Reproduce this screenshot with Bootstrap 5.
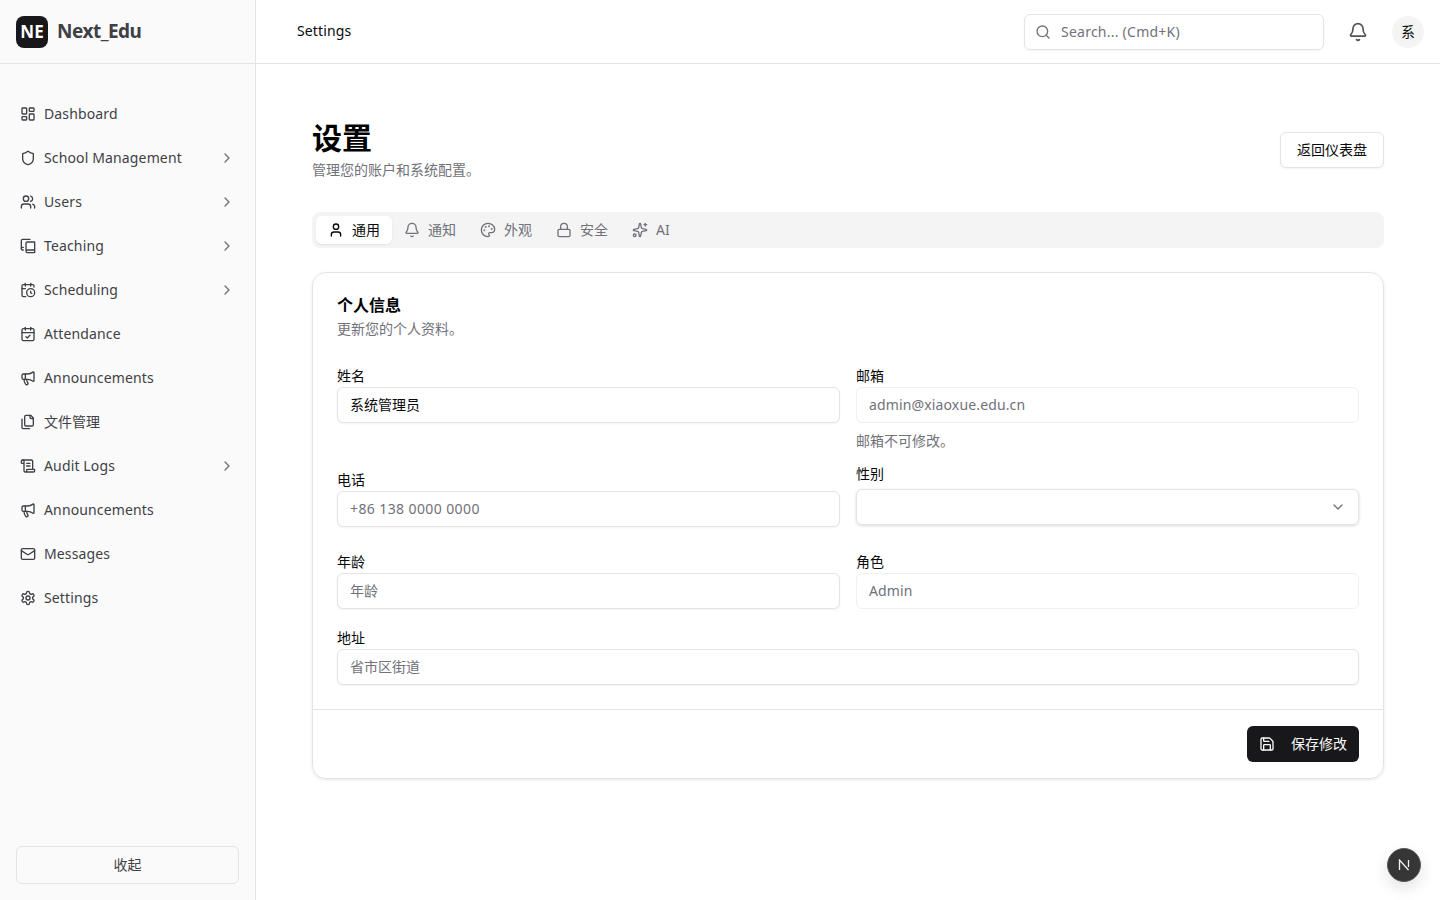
<!DOCTYPE html>
<html lang="zh-CN">
<head>
  <meta charset="UTF-8" />
  <title>Settings | Next_Edu</title>
  <meta name="viewport" content="width=device-width, initial-scale=1.0" />
  <link href="https://cdn.jsdelivr.net/npm/bootstrap@5.3.3/dist/css/bootstrap.min.css" rel="stylesheet" />
  <style>
    body {
      font-family: "Noto Sans", "Noto Sans CJK SC", sans-serif;
      font-size: 14px;
      color: #09090b;
      height: 100vh;
      overflow: hidden;
    }

    .ico {
      width: 16px;
      height: 16px;
      flex: none;
      fill: none;
      stroke: currentColor;
      stroke-width: 2;
      stroke-linecap: round;
      stroke-linejoin: round;
    }

    /* the font sits a pixel low in its line box, this lifts it */
    .lbl {
      margin-bottom: 2px;
    }

    .lat {
      letter-spacing: .14px;
    }

    .side-bar {
      width: 256px;
      flex: none;
      background: #fafafa;
      border-right: 1px solid #e4e4e7;
    }

    .brand-row {
      height: 64px;
      padding: 0 16px;
      gap: 9px;
      border-bottom: 1px solid #e4e4e7;
    }

    .brand-logo {
      width: 32px;
      height: 32px;
      border-radius: 8px;
      background: #18181b;
      color: #fff;
      font-size: 17px;
      font-weight: 700;
    }

    .brand-name {
      font-size: 19px;
      font-weight: 700;
      letter-spacing: -.5px;
      color: #3f3f46;
    }

    .side-nav {
      padding: 28px 16px 0;
    }

    .side-link {
      height: 44px;
      padding: 0 4px;
      gap: 8px;
      color: #3f3f46;
      text-decoration: none;
    }

    .side-link .chev {
      margin-left: auto;
      color: #71717a;
    }

    .side-foot {
      padding: 0 16px 16px;
    }

    .collapse-btn {
      height: 38px;
      padding: 0 0 2px;
      background: #fafafa;
      border: 1px solid #e4e4e7;
      border-radius: 6px;
      color: #3f3f46;
      font-size: 14px;
    }

    .top-bar {
      height: 64px;
      flex: none;
      padding: 0 16px 0 41px;
      border-bottom: 1px solid #e4e4e7;
    }

    .search-box {
      width: 300px;
      height: 36px;
      padding: 0 10px;
      gap: 10px;
      border: 1px solid #e4e4e7;
      border-radius: 6px;
      color: #71717a;
      box-shadow: 0 1px 2px rgba(0, 0, 0, .05);
    }

    .search-txt {
      letter-spacing: .24px;
    }

    .bell-btn {
      margin: 0 24px 0 24px;
      color: #52525b;
    }

    .bell-btn .ico {
      width: 20px;
      height: 20px;
    }

    .avatar-dot {
      width: 32px;
      height: 32px;
      background: #f4f4f5;
    }

    .page-body {
      padding: 56px 56px 0;
    }

    .page-title {
      font-size: 30px;
      line-height: 36px;
      font-weight: 700;
      margin: 0;
      color: #000;
    }

    .muted-text {
      color: #71717a;
    }

    .page-sub {
      line-height: 21px;
      margin: 3px 0 0;
    }

    .back-btn {
      height: 36px;
      padding: 0 16px 2px;
      font-size: 14px;
      color: #09090b;
      background: #fff;
      border: 1px solid #e4e4e7;
      border-radius: 6px;
      box-shadow: 0 1px 2px rgba(0, 0, 0, .05);
    }

    .tab-strip {
      height: 36px;
      margin-top: 32px;
      padding: 4px;
      background: #f4f4f5;
      border-radius: 8px;
    }

    .tab-item {
      height: 28px;
      padding: 0 12px;
      gap: 8px;
      color: #71717a;
      border-radius: 6px;
    }

    .tab-item.on {
      background: #fff;
      color: #09090b;
      box-shadow: 0 1px 2px rgba(0, 0, 0, .08);
    }

    .form-panel {
      margin-top: 24px;
      border: 1px solid #e4e4e7;
      border-radius: 14px;
      box-shadow: 0 1px 3px rgba(0, 0, 0, .1);
    }

    .panel-body {
      padding: 20px 24px 24px;
    }

    .panel-title {
      font-size: 16px;
      line-height: 24px;
      font-weight: 700;
      margin: 0;
      color: #000;
    }

    .panel-sub {
      line-height: 21px;
      margin: 1px 0 0;
    }

    .fld-label {
      display: block;
      line-height: 19px;
      margin: 0 0 2px;
      font-size: 14px;
    }

    .fld-input {
      height: 36px;
      padding: 0 12px 2px;
      font-size: 14px;
      color: #09090b;
      border: 1px solid #e4e4e7;
      border-radius: 6px;
      box-shadow: 0 1px 2px rgba(0, 0, 0, .05);
    }

    .fld-input::placeholder {
      color: #71717a;
      opacity: 1;
    }

    .fld-input:disabled {
      background: #fff;
      color: #71717a;
      box-shadow: none;
      border-color: #f0f0f2;
    }

    .fld-digits {
      letter-spacing: .4px;
    }

    .fld-select {
      height: 36px;
      padding: 0 12px;
      color: #71717a;
      border: 1px solid #e4e4e7;
      border-radius: 6px;
      box-shadow: 0 1px 3px rgba(0, 0, 0, .15);
      margin: 6px 0 2px;
    }

    .fld-hint {
      line-height: 21px;
      margin: 7px 0 1px;
    }

    .form-row-a { margin-top: 27px; }
    .form-row-b { margin-top: 12px; }
    .form-row-c { margin-top: 25px; }
    .form-row-d { margin-top: 19px; }

    .panel-foot {
      padding: 16px 24px;
      border-top: 1px solid #e4e4e7;
    }

    .save-btn {
      height: 36px;
      padding: 0 12px;
      gap: 16px;
      font-size: 14px;
      color: #fafafa;
      background: #18181b;
      border: 0;
      border-radius: 6px;
    }

    .dev-badge {
      position: fixed;
      right: 19px;
      bottom: 18px;
      width: 34px;
      height: 34px;
      background: #363636;
      border: 1px solid #5a5a5a;
      box-shadow: 0 6px 16px rgba(0, 0, 0, .12);
    }

    .dev-badge svg {
      width: 12px;
      height: 12px;
      fill: none;
      stroke: #f2f2f2;
      stroke-width: 1.3;
    }
  </style>
</head>
<body class="d-flex">
  <svg class="d-none">
    <symbol id="i-dash" viewBox="0 0 24 24"><rect width="7" height="9" x="3" y="3" rx="1"/><rect width="7" height="5" x="14" y="3" rx="1"/><rect width="7" height="9" x="14" y="12" rx="1"/><rect width="7" height="5" x="3" y="16" rx="1"/></symbol>
    <symbol id="i-shield" viewBox="0 0 24 24"><path d="M20 13c0 5-3.5 7.5-7.66 8.95a1 1 0 0 1-.67-.01C7.5 20.5 4 18 4 13V6a1 1 0 0 1 1-1c2 0 4.5-1.2 6.24-2.72a1.17 1.17 0 0 1 1.52 0C14.51 3.81 17 5 19 5a1 1 0 0 1 1 1z"/></symbol>
    <symbol id="i-users" viewBox="0 0 24 24"><path d="M16 21v-2a4 4 0 0 0-4-4H6a4 4 0 0 0-4 4v2"/><circle cx="9" cy="7" r="4"/><path d="M22 21v-2a4 4 0 0 0-3-3.87"/><path d="M16 3.13a4 4 0 0 1 0 7.75"/></symbol>
    <symbol id="i-chev" viewBox="0 0 24 24"><path d="m9 18 6-6-6-6"/></symbol>
    <symbol id="i-down" viewBox="0 0 24 24"><path d="m6 9 6 6 6-6"/></symbol>
    <symbol id="i-book" viewBox="0 0 24 24"><path d="M2 16V4a2 2 0 0 1 2-2h11"/><path d="M22 18H11a2 2 0 1 0 0 4h10.5a.5.5 0 0 0 .5-.5v-15a.5.5 0 0 0-.5-.5H11a2 2 0 0 0-2 2v12"/><path d="M5 14H4a2 2 0 1 0 0 4h1"/></symbol>
    <symbol id="i-calclock" viewBox="0 0 24 24"><path d="M16 14v2.2l1.6 1"/><path d="M16 2v4"/><path d="M21 7.5V6a2 2 0 0 0-2-2H5a2 2 0 0 0-2 2v14a2 2 0 0 0 2 2h3.5"/><path d="M3 10h5"/><path d="M8 2v4"/><circle cx="16" cy="16" r="6"/></symbol>
    <symbol id="i-calcheck" viewBox="0 0 24 24"><path d="M8 2v4"/><path d="M16 2v4"/><rect width="18" height="18" x="3" y="4" rx="2"/><path d="M3 10h18"/><path d="m9 16 2 2 4-4"/></symbol>
    <symbol id="i-mega" viewBox="0 0 24 24"><path d="M11 6a13 13 0 0 0 8.4-2.8A1 1 0 0 1 21 4v12a1 1 0 0 1-1.6.8A13 13 0 0 0 11 14H5a2 2 0 0 1-2-2V8a2 2 0 0 1 2-2z"/><path d="M6 14a12 12 0 0 0 2.4 7.2 2 2 0 0 0 3.2-2.4A8 8 0 0 1 10 14"/><path d="M8 6v8"/></symbol>
    <symbol id="i-files" viewBox="0 0 24 24"><path d="M20 7h-3a2 2 0 0 1-2-2V2"/><path d="M9 18a2 2 0 0 1-2-2V4a2 2 0 0 1 2-2h7l4 4v10a2 2 0 0 1-2 2Z"/><path d="M3 7.6v12.8A1.6 1.6 0 0 0 4.6 22h9.8"/></symbol>
    <symbol id="i-scroll" viewBox="0 0 24 24"><path d="M15 12h-5"/><path d="M15 8h-5"/><path d="M19 17V5a2 2 0 0 0-2-2H4"/><path d="M8 21h12a2 2 0 0 0 2-2v-1a1 1 0 0 0-1-1H11a1 1 0 0 0-1 1v1a2 2 0 1 1-4 0V5a2 2 0 1 0-4 0v2a1 1 0 0 0 1 1h3"/></symbol>
    <symbol id="i-mail" viewBox="0 0 24 24"><path d="m22 7-8.991 5.727a2 2 0 0 1-2.009 0L2 7"/><rect x="2" y="4" width="20" height="16" rx="2"/></symbol>
    <symbol id="i-gear" viewBox="0 0 24 24"><path d="M12.22 2h-.44a2 2 0 0 0-2 2v.18a2 2 0 0 1-1 1.73l-.43.25a2 2 0 0 1-2 0l-.15-.08a2 2 0 0 0-2.73.73l-.22.38a2 2 0 0 0 .73 2.73l.15.1a2 2 0 0 1 1 1.72v.51a2 2 0 0 1-1 1.74l-.15.09a2 2 0 0 0-.73 2.73l.22.38a2 2 0 0 0 2.73.73l.15-.08a2 2 0 0 1 2 0l.43.25a2 2 0 0 1 1 1.73V20a2 2 0 0 0 2 2h.44a2 2 0 0 0 2-2v-.18a2 2 0 0 1 1-1.73l.43-.25a2 2 0 0 1 2 0l.15.08a2 2 0 0 0 2.73-.73l.22-.39a2 2 0 0 0-.73-2.73l-.15-.08a2 2 0 0 1-1-1.74v-.5a2 2 0 0 1 1-1.74l.15-.09a2 2 0 0 0 .73-2.73l-.22-.38a2 2 0 0 0-2.73-.73l-.15.08a2 2 0 0 1-2 0l-.43-.25a2 2 0 0 1-1-1.73V4a2 2 0 0 0-2-2z"/><circle cx="12" cy="12" r="3"/></symbol>
    <symbol id="i-search" viewBox="0 0 24 24"><path d="m21 21-4.34-4.34"/><circle cx="11" cy="11" r="8"/></symbol>
    <symbol id="i-bell" viewBox="0 0 24 24"><path d="M10.268 21a2 2 0 0 0 3.464 0"/><path d="M3.262 15.326A1 1 0 0 0 4 17h16a1 1 0 0 0 .74-1.673C19.41 13.956 18 12.499 18 8A6 6 0 0 0 6 8c0 4.499-1.411 5.956-2.738 7.326"/></symbol>
    <symbol id="i-user" viewBox="0 0 24 24"><path d="M19 21v-2a4 4 0 0 0-4-4H9a4 4 0 0 0-4 4v2"/><circle cx="12" cy="7" r="4"/></symbol>
    <symbol id="i-palette" viewBox="0 0 24 24"><path d="M12 22a1 1 0 0 1 0-20 10 9 0 0 1 10 9 5 5 0 0 1-5 5h-2.25a1.75 1.75 0 0 0-1.4 2.8l.3.4a1.75 1.75 0 0 1-1.4 2.8z"/><circle cx="13.5" cy="6.5" r=".5" fill="currentColor"/><circle cx="17.5" cy="10.5" r=".5" fill="currentColor"/><circle cx="6.5" cy="12.5" r=".5" fill="currentColor"/><circle cx="8.5" cy="7.5" r=".5" fill="currentColor"/></symbol>
    <symbol id="i-lock" viewBox="0 0 24 24"><rect width="18" height="11" x="3" y="11" rx="2"/><path d="M7 11V7a5 5 0 0 1 10 0v4"/></symbol>
    <symbol id="i-spark" viewBox="0 0 24 24"><path d="M11.017 2.814a1 1 0 0 1 1.966 0l1.051 5.558a2 2 0 0 0 1.594 1.594l5.558 1.051a1 1 0 0 1 0 1.966l-5.558 1.051a2 2 0 0 0-1.594 1.594l-1.051 5.558a1 1 0 0 1-1.966 0l-1.051-5.558a2 2 0 0 0-1.594-1.594l-5.558-1.051a1 1 0 0 1 0-1.966l5.558-1.051a2 2 0 0 0 1.594-1.594z"/><path d="M20 2v4"/><path d="M22 4h-4"/><circle cx="4" cy="20" r="2"/></symbol>
    <symbol id="i-save" viewBox="0 0 24 24"><path d="M15.2 3a2 2 0 0 1 1.4.6l3.8 3.8a2 2 0 0 1 .6 1.4V19a2 2 0 0 1-2 2H5a2 2 0 0 1-2-2V5a2 2 0 0 1 2-2z"/><path d="M17 21v-7a1 1 0 0 0-1-1H8a1 1 0 0 0-1 1v7"/><path d="M7 3v4a1 1 0 0 0 1 1h7"/></symbol>
  </svg>

  <aside class="side-bar d-flex flex-column">
    <div class="brand-row d-flex align-items-center">
      <div class="brand-logo d-flex align-items-center justify-content-center">NE</div>
      <span class="brand-name">Next_Edu</span>
    </div>
    <nav class="side-nav flex-grow-1 d-flex flex-column">
      <a class="side-link d-flex align-items-center" href="#"><svg class="ico"><use href="#i-dash"/></svg><span class="lbl lat">Dashboard</span></a>
      <a class="side-link d-flex align-items-center" href="#"><svg class="ico"><use href="#i-shield"/></svg><span class="lbl lat">School Management</span><svg class="ico chev"><use href="#i-chev"/></svg></a>
      <a class="side-link d-flex align-items-center" href="#"><svg class="ico"><use href="#i-users"/></svg><span class="lbl lat">Users</span><svg class="ico chev"><use href="#i-chev"/></svg></a>
      <a class="side-link d-flex align-items-center" href="#"><svg class="ico"><use href="#i-book"/></svg><span class="lbl lat">Teaching</span><svg class="ico chev"><use href="#i-chev"/></svg></a>
      <a class="side-link d-flex align-items-center" href="#"><svg class="ico"><use href="#i-calclock"/></svg><span class="lbl lat">Scheduling</span><svg class="ico chev"><use href="#i-chev"/></svg></a>
      <a class="side-link d-flex align-items-center" href="#"><svg class="ico"><use href="#i-calcheck"/></svg><span class="lbl lat">Attendance</span></a>
      <a class="side-link d-flex align-items-center" href="#"><svg class="ico"><use href="#i-mega"/></svg><span class="lbl lat">Announcements</span></a>
      <a class="side-link d-flex align-items-center" href="#"><svg class="ico"><use href="#i-files"/></svg><span class="lbl">文件管理</span></a>
      <a class="side-link d-flex align-items-center" href="#"><svg class="ico"><use href="#i-scroll"/></svg><span class="lbl lat">Audit Logs</span><svg class="ico chev"><use href="#i-chev"/></svg></a>
      <a class="side-link d-flex align-items-center" href="#"><svg class="ico"><use href="#i-mega"/></svg><span class="lbl lat">Announcements</span></a>
      <a class="side-link d-flex align-items-center" href="#"><svg class="ico"><use href="#i-mail"/></svg><span class="lbl lat">Messages</span></a>
      <a class="side-link d-flex align-items-center" href="#"><svg class="ico"><use href="#i-gear"/></svg><span class="lbl lat">Settings</span></a>
    </nav>
    <div class="side-foot">
      <button type="button" class="collapse-btn w-100">收起</button>
    </div>
  </aside>

  <div class="flex-grow-1 d-flex flex-column">
    <header class="top-bar d-flex align-items-center">
      <span class="me-auto lbl lat">Settings</span>
      <div class="search-box d-flex align-items-center"><svg class="ico"><use href="#i-search"/></svg><span class="search-txt">Search... (Cmd+K)</span></div>
      <div class="bell-btn d-flex"><svg class="ico"><use href="#i-bell"/></svg></div>
      <div class="avatar-dot rounded-circle d-flex align-items-center justify-content-center">系</div>
    </header>

    <main class="page-body flex-grow-1">
      <div class="d-flex align-items-center justify-content-between">
        <div>
          <h1 class="page-title">设置</h1>
          <p class="page-sub muted-text">管理您的账户和系统配置。</p>
        </div>
        <button type="button" class="back-btn">返回仪表盘</button>
      </div>

      <div class="tab-strip d-flex">
        <div class="tab-item on d-flex align-items-center"><svg class="ico"><use href="#i-user"/></svg><span class="lbl">通用</span></div>
        <div class="tab-item d-flex align-items-center"><svg class="ico"><use href="#i-bell"/></svg><span class="lbl">通知</span></div>
        <div class="tab-item d-flex align-items-center"><svg class="ico"><use href="#i-palette"/></svg><span class="lbl">外观</span></div>
        <div class="tab-item d-flex align-items-center"><svg class="ico"><use href="#i-lock"/></svg><span class="lbl">安全</span></div>
        <div class="tab-item d-flex align-items-center"><svg class="ico"><use href="#i-spark"/></svg><span class="lbl">AI</span></div>
      </div>

      <section class="form-panel">
        <div class="panel-body">
          <h2 class="panel-title">个人信息</h2>
          <p class="panel-sub muted-text">更新您的个人资料。</p>

          <div class="row gx-3 form-row-a">
            <div class="col-6">
              <label class="fld-label">姓名</label>
              <input class="form-control fld-input" value="系统管理员" />
            </div>
            <div class="col-6">
              <label class="fld-label">邮箱</label>
              <input class="form-control fld-input lat" value="admin@xiaoxue.edu.cn" disabled />
              <p class="fld-hint muted-text">邮箱不可修改。</p>
            </div>
          </div>

          <div class="row gx-3 form-row-b">
            <div class="col-6 align-self-end">
              <label class="fld-label">电话</label>
              <input class="form-control fld-input fld-digits" placeholder="+86 138 0000 0000" />
            </div>
            <div class="col-6">
              <label class="fld-label">性别</label>
              <div class="fld-select d-flex align-items-center justify-content-end"><svg class="ico"><use href="#i-down"/></svg></div>
            </div>
          </div>

          <div class="row gx-3 form-row-c">
            <div class="col-6">
              <label class="fld-label">年龄</label>
              <input class="form-control fld-input" placeholder="年龄" />
            </div>
            <div class="col-6">
              <label class="fld-label">角色</label>
              <input class="form-control fld-input lat" value="Admin" disabled />
            </div>
          </div>

          <div class="form-row-d">
            <label class="fld-label">地址</label>
            <input class="form-control fld-input" placeholder="省市区街道" />
          </div>
        </div>
        <div class="panel-foot d-flex justify-content-end">
          <button type="button" class="save-btn d-flex align-items-center"><svg class="ico"><use href="#i-save"/></svg><span class="lbl">保存修改</span></button>
        </div>
      </section>
    </main>
  </div>

  <div class="dev-badge rounded-circle d-flex align-items-center justify-content-center">
    <svg viewBox="0 0 12 12"><path d="M1.5 11V1L10.5 11"/><path d="M10.5 1V8"/></svg>
  </div>

  <script src="https://cdn.jsdelivr.net/npm/bootstrap@5.3.3/dist/js/bootstrap.bundle.min.js"></script>
</body>
</html>
